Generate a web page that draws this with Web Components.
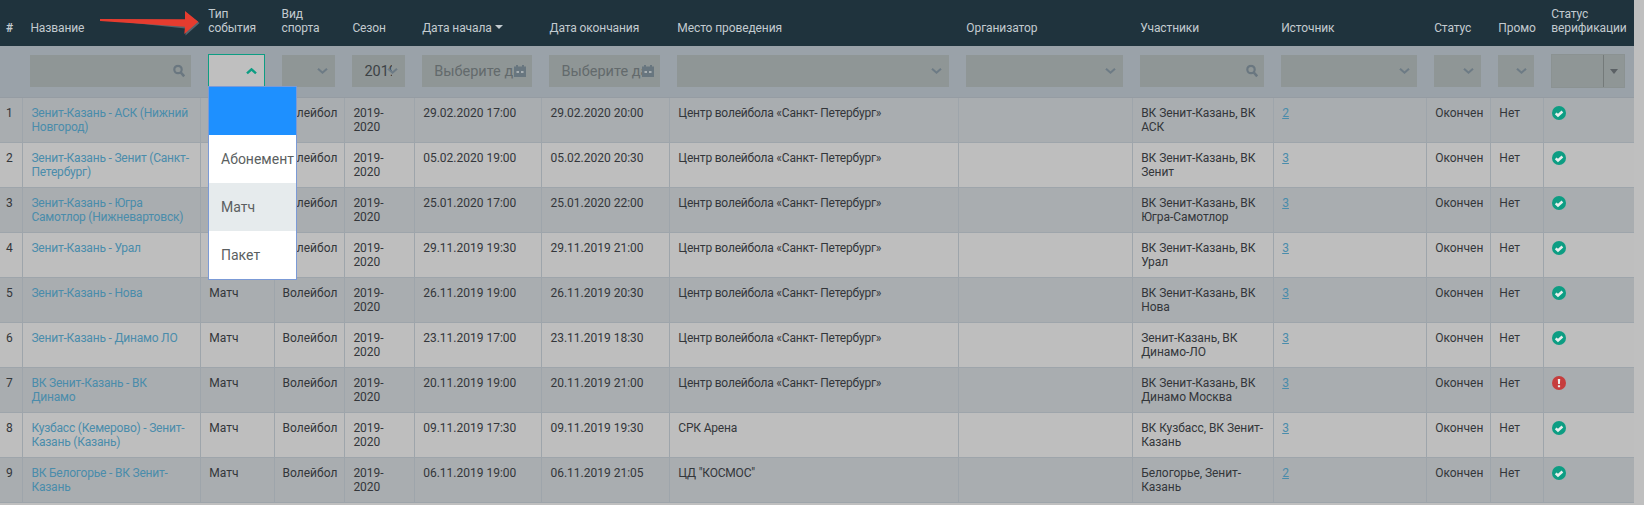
<!DOCTYPE html>
<html lang="ru"><head><meta charset="utf-8"><style>
html,body{margin:0;padding:0;background:#bfbfbf;height:505px;overflow:hidden;font-family:Roboto,"Liberation Sans",sans-serif}
</style></head><body>
<event-table></event-table>
<script>
const COLS='22.4px 177.9px 73.3px 70.8px 69.8px 127.3px 127.9px 289px 173.8px 141px 153px 64.2px 52.9px 90.6px';
const ICON={
 search:'<svg width="12" height="13" viewBox="0 0 12 13"><circle cx="5" cy="5" r="3.7" fill="none" stroke="currentColor" stroke-width="2.2"/><path d="M7.8 8l3.4 3.8" stroke="currentColor" stroke-width="2.6"/></svg>',
 down:'<svg width="11" height="7" viewBox="0 0 11 7"><path d="M1 1.2l4.5 4 4.5-4" fill="none" stroke="currentColor" stroke-width="2.1"/></svg>',
 up:'<svg width="11" height="7" viewBox="0 0 11 7"><path d="M1 5.8l4.5-4 4.5 4" fill="none" stroke="currentColor" stroke-width="2.4"/></svg>',
 cal:'<svg width="12" height="12" viewBox="0 0 12 12"><path fill="currentColor" d="M0 1.5h2V0h2v1.5h4V0h2v1.5h2V12H0z"/><path fill="#a9b0b3" d="M2.5 6h2.5v2H2.5zM7 6h2.5v2H7z"/></svg>',
 ok:'<svg width="14" height="14" viewBox="0 0 14 14"><circle cx="7" cy="7" r="7" fill="#0d9d83"/><path d="M3.7 7.3l2.3 2.2 4.4-4" fill="none" stroke="#e8efee" stroke-width="2.5"/></svg>',
 err:'<svg width="14" height="14" viewBox="0 0 14 14"><circle cx="7" cy="7" r="7" fill="#c63d3d"/><path d="M5.8 3h2.4l-.3 5H6.1zM5.9 9.2h2.2v2H5.9z" fill="#eee"/></svg>'
};

class BaseEl extends HTMLElement{
  render(css,html){ if(!this.shadowRoot) this.attachShadow({mode:'open'}); this.shadowRoot.innerHTML='<style>'+css+'</style>'+html; }
}
class HeadCell extends BaseEl{ connectedCallback(){ this.render(
 `:host{display:flex;align-items:flex-end;padding:0 10px 11px 8px;min-width:0;box-sizing:border-box;color:#c3cbd0;font:12px/14px Roboto,sans-serif;letter-spacing:-.1px}
 :host([strong]){font-weight:700;padding:0 0 11px 6px}
 b{display:inline-block;width:0;height:0;border:4px solid transparent;border-top:4px solid #c3cbd0;border-bottom:0;margin:0 0 3px 3px;vertical-align:middle}`,
 '<span><slot></slot>'+(this.hasAttribute('sorted')?'<b></b>':'')+'</span>');}}
class FilterBox extends BaseEl{ connectedCallback(){
 const t=this.getAttribute('type')||'plain', txt=this.getAttribute('text')||'', ph=this.getAttribute('ph')||'';
 let ic='';
 if(t==='search') ic=`<i style="color:#6a7780;right:6px">${ICON.search}</i>`;
 if(t==='select') ic=`<i style="color:#6d7b85">${ICON.down}</i>`;
 if(t==='open') ic=`<i style="color:#0d9d83">${ICON.up}</i>`;
 if(t==='date') ic=`<i style="color:#68767f;right:6px;background:#8f9696">${ICON.cal}</i>`;
 this.render(`:host{display:block;position:relative;height:32px;min-width:0;background:#8f9696;overflow:hidden;box-sizing:border-box}
 :host([type=open]){background:#bfbfbf;border:1px solid #0d9d83;height:33px;margin-top:-1px}
 i{position:absolute;right:7px;top:50%;transform:translateY(-50%);display:flex;font-style:normal}
 span{position:absolute;left:12px;top:0;line-height:33px;white-space:nowrap;overflow:hidden}
 .t{color:#3d4245;font-size:14.5px;width:28px}.p{color:#636a6c;font-size:14.5px}`,
 (txt?`<span class="t">${txt}</span>`:'')+(ph?`<span class="p">${ph}</span>`:'')+ic);
}}
class SplitBox extends BaseEl{ connectedCallback(){ this.render(
 `:host{display:flex;height:34px;margin-top:-1px;background:#8f9696;border:1px solid #8b9292;box-sizing:border-box}
 .a{flex:1;border-right:1px solid #747a7a}.b{width:20px;display:flex;align-items:center;justify-content:center}
 .b b{width:0;height:0;border:4px solid transparent;border-top:5px solid #5b6165;border-bottom:0}`,
 '<div class="a"></div><div class="b"><b></b></div>');}}
class FilterCell extends BaseEl{ connectedCallback(){ this.render(
 ':host{display:block;padding:9px 9px 0 8px;min-width:0;box-sizing:border-box}',
 '<slot></slot>');}}
class BodyCell extends BaseEl{ connectedCallback(){ this.render(
 `:host{display:block;padding:8px 6px 0 8px;border-left:1px solid #9ea5ab;box-sizing:border-box;min-width:0;color:#33363a;font:12px/14px Roboto,sans-serif;overflow:hidden}
 :host(:first-child){border-left:0;padding-left:6px;padding-right:0}
 :host([tight]){letter-spacing:-.2px}
 :host([semi]){letter-spacing:-.06px}
 :host([name]){padding-right:11px}
 ::slotted(a){color:#4a8cab;text-decoration:none;letter-spacing:-.2px}
 ::slotted(a[u]){text-decoration:underline;letter-spacing:0}`,
 '<slot></slot>');}}
class EventRow extends BaseEl{ connectedCallback(){ this.render(
 `:host{display:grid;grid-template-columns:${COLS};height:45px;box-sizing:border-box;border-bottom:1px solid #9ea5ab;background:var(--bg)}
 :host([odd]){--bg:#a9adb0} :host(:not([odd])){--bg:#bebebe}`,
 '<slot></slot>');}}
class HeadRow extends BaseEl{ connectedCallback(){ this.render(
 `:host{display:grid;grid-template-columns:${COLS};height:46px;background:#1f333d}`,'<slot></slot>');}}
class FilterRow extends BaseEl{ connectedCallback(){ this.render(
 `:host{display:grid;grid-template-columns:${COLS};height:52px;box-sizing:border-box;background:#9aa2a9;border-bottom:1px solid #959ca3}`,'<slot></slot>');}}
class DropMenu extends BaseEl{ connectedCallback(){ this.render(
 `:host{position:absolute;left:208px;top:86px;width:89px;box-sizing:border-box;border:1px solid #7b9ad6;background:#fff;color:#5b5f61;font:14px/48px Roboto,sans-serif;z-index:5}
 div{height:48px;padding-left:12px;white-space:nowrap}
 .s{background:#1e90ff}.h{background:#e6ebed}`,
 '<div class="s"></div><div>Абонемент</div><div class="h">Матч</div><div>Пакет</div>');}}
class RedArrow extends BaseEl{ connectedCallback(){ this.render(
 ':host{position:absolute;left:98px;top:9px;z-index:6;display:block;line-height:0}',
 `<svg width="104" height="30" viewBox="0 0 104 30"><path d="M2 10.6L87 11V3L101.5 14 87.5 26.5 87.5 19.4z" fill="#6a767d" opacity=".75"/><path d="M2 10L87 10.3V2L100.3 12.7 86.3 25 87 17.7 2 12z" fill="#e63c2f"/></svg>`);}}
class EventTable extends BaseEl{ connectedCallback(){
 const heads=['#','Название','Тип события','Вид спорта','Сезон','Дата начала','Дата окончания','Место проведения','Организатор','Участники','Источник','Статус','Промо','Статус верификации'];
 const V='Центр волейбола «Санкт- Петербург»';
 const rows=[
 ['Зенит-Казань - АСК (Нижний Новгород)','29.02.2020 17:00','29.02.2020 20:00',V,'ВК Зенит-Казань, ВК АСК','2','ok'],
 ['Зенит-Казань - Зенит (Санкт-Петербург)','05.02.2020 19:00','05.02.2020 20:30',V,'ВК Зенит-Казань, ВК Зенит','3','ok'],
 ['Зенит-Казань - Югра Самотлор (Нижневартовск)','25.01.2020 17:00','25.01.2020 22:00',V,'ВК Зенит-Казань, ВК Югра-Самотлор','3','ok'],
 ['Зенит-Казань - Урал','29.11.2019 19:30','29.11.2019 21:00',V,'ВК Зенит-Казань, ВК Урал','3','ok'],
 ['Зенит-Казань - Нова','26.11.2019 19:00','26.11.2019 20:30',V,'ВК Зенит-Казань, ВК Нова','3','ok'],
 ['Зенит-Казань - Динамо ЛО','23.11.2019 17:00','23.11.2019 18:30',V,'Зенит-Казань, ВК Динамо-ЛО','3','ok'],
 ['ВК Зенит-Казань - ВК Динамо','20.11.2019 19:00','20.11.2019 21:00',V,'ВК Зенит-Казань, ВК Динамо Москва','3','err'],
 ['Кузбасс (Кемерово) - Зенит-Казань (Казань)','09.11.2019 17:30','09.11.2019 19:30','СРК Арена','ВК Кузбасс, ВК Зенит-Казань','3','ok'],
 ['ВК Белогорье - ВК Зенит-Казань','06.11.2019 19:00','06.11.2019 21:05','ЦД "КОСМОС"','Белогорье, Зенит-Казань','2','ok']];
 const f=[[''],['search'],['open'],['select'],['select','2019'],['date','','Выберите да'],['date','','Выберите да'],['select'],['select'],['search'],['select'],['select'],['select']];
 let h='<head-row>'+heads.map((x,i)=>`<head-cell${i==0?' strong':''}${i==5?' sorted':''}>${x}</head-cell>`).join('')+'</head-row>';
 h+='<filter-row>'+f.map(a=>a[0]===''?'<filter-cell></filter-cell>':`<filter-cell><filter-box type="${a[0]}"${a[1]?` text="${a[1]}"`:''}${a[2]?` ph="${a[2]}"`:''}></filter-box></filter-cell>`).join('')+'<filter-cell><split-box></split-box></filter-cell></filter-row>';
 rows.forEach((r,i)=>{
  const c=[i+1,`<a>${r[0]}</a>`,i<4?'':'Матч','Волейбол','2019-2020',r[1],r[2],r[3],'',r[4],`<a u>${r[5]}</a>`,'Окончен','Нет',`<span style="display:block;line-height:0">${ICON[r[6]]}</span>`];
  h+=`<event-row${i%2==0?' odd':''}>`+c.map((x,j)=>`<body-cell${j==1?' name':''}${j==7?' tight':''}${j==9?' semi':''}>${x}</body-cell>`).join('')+'</event-row>';
 });
 this.render(':host{display:block;position:relative;width:1634px;height:505px}', h+'<drop-menu></drop-menu><red-arrow></red-arrow>');
}}
const defs={'head-cell':HeadCell,'filter-box':FilterBox,'split-box':SplitBox,'filter-cell':FilterCell,'body-cell':BodyCell,'event-row':EventRow,'head-row':HeadRow,'filter-row':FilterRow,'drop-menu':DropMenu,'red-arrow':RedArrow,'event-table':EventTable};
for(const k in defs) customElements.define(k,defs[k]);
</script>
</body></html>
